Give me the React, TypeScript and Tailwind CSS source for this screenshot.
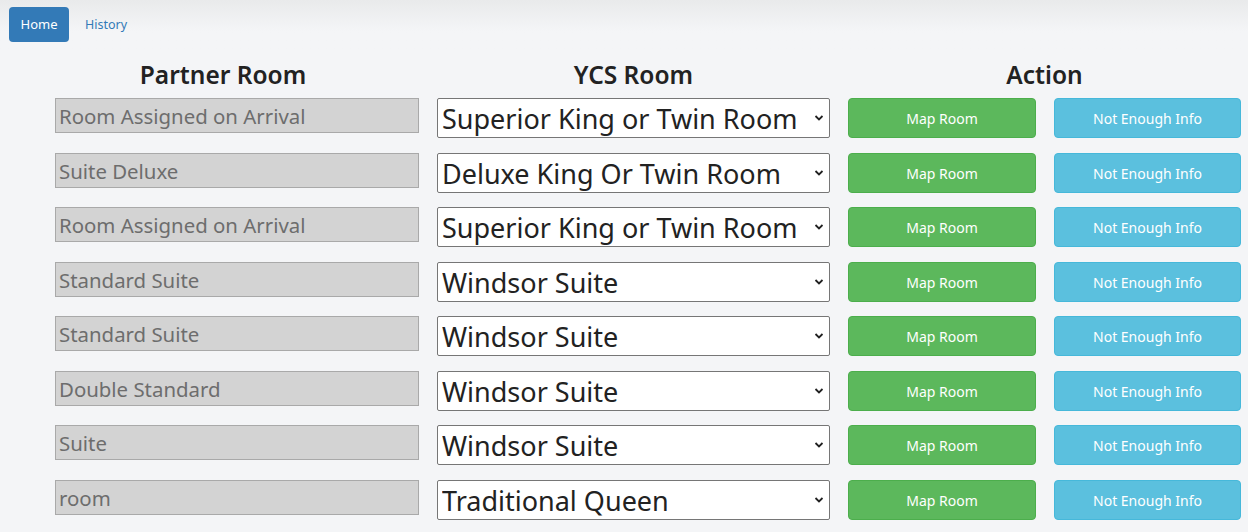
const rows = [
  { partner: "Room Assigned on Arrival", ycs: "Superior King or Twin Room" },
  { partner: "Suite Deluxe", ycs: "Deluxe King Or Twin Room" },
  { partner: "Room Assigned on Arrival", ycs: "Superior King or Twin Room" },
  { partner: "Standard Suite", ycs: "Windsor Suite" },
  { partner: "Standard Suite", ycs: "Windsor Suite" },
  { partner: "Double Standard", ycs: "Windsor Suite" },
  { partner: "Suite", ycs: "Windsor Suite" },
  { partner: "room", ycs: "Traditional Queen" },
];

function Chevron() {
  return (
    <svg
      className="pointer-events-none absolute right-[6px] top-1/2 -translate-y-1/2"
      width="10"
      height="7"
      viewBox="0 0 10 7"
      fill="none"
    >
      <path d="M1.5 1.5 L5 5 L8.5 1.5" stroke="#222" strokeWidth="1.8" />
    </svg>
  );
}

export default function App() {
  return (
    <div
      className="min-h-[532px] bg-[#f4f5f7] text-[#333]"
      style={{ fontFamily: '"Noto Sans", "Open Sans", sans-serif' }}
    >
      <nav className="flex h-[52px] items-start gap-4 bg-gradient-to-b from-[#e9eaeb] to-[#f4f5f7] to-60% pl-[9px] pt-[7px]">
        <button className="h-[35px] w-[60px] rounded-[4px] bg-[#337ab7] pt-[1px] text-[13px] text-white">
          Home
        </button>
        <a className="mt-[9px] text-[12.5px] text-[#337ab7]">History</a>
      </nav>

      <div className="pl-[55px]">
        <div className="flex h-[46px] items-center text-[24.5px] font-semibold text-[#222]">
          <div className="w-[336px] text-center">Partner Room</div>
          <div className="ml-[46px] w-[393px] text-center">YCS Room</div>
          <div className="ml-[18px] w-[393px] text-center">Action</div>
        </div>

        {rows.map((r, i) => (
          <div key={i} className="flex h-[40px] items-start gap-[18px] mb-[14.5px]">
            <input
              readOnly
              value={r.partner}
              className="h-[35px] w-[364px] border border-[#a9a9a9] bg-[#d3d3d3] px-[3px] pt-[1px] text-[20.4px] text-[#6d6d6d] outline-none"
            />
            <div className="relative h-[40px] w-[393px]">
              <select
                defaultValue={r.ycs}
                className="h-full w-full appearance-none rounded-[2px] border border-[#767676] bg-white pl-[4px] text-[27px] text-[#222] outline-none"
              >
                <option>{r.ycs}</option>
              </select>
              <Chevron />
            </div>
            <button className="h-[40px] w-[188px] rounded-[4px] border border-[#4cae4c] bg-[#5cb85c] pt-[1px] text-[14px] text-white">
              Map Room
            </button>
            <button className="h-[40px] w-[187px] rounded-[4px] border border-[#46b8da] bg-[#5bc0de] pt-[1px] text-[14px] text-white">
              Not Enough Info
            </button>
          </div>
        ))}
      </div>
    </div>
  );
}
